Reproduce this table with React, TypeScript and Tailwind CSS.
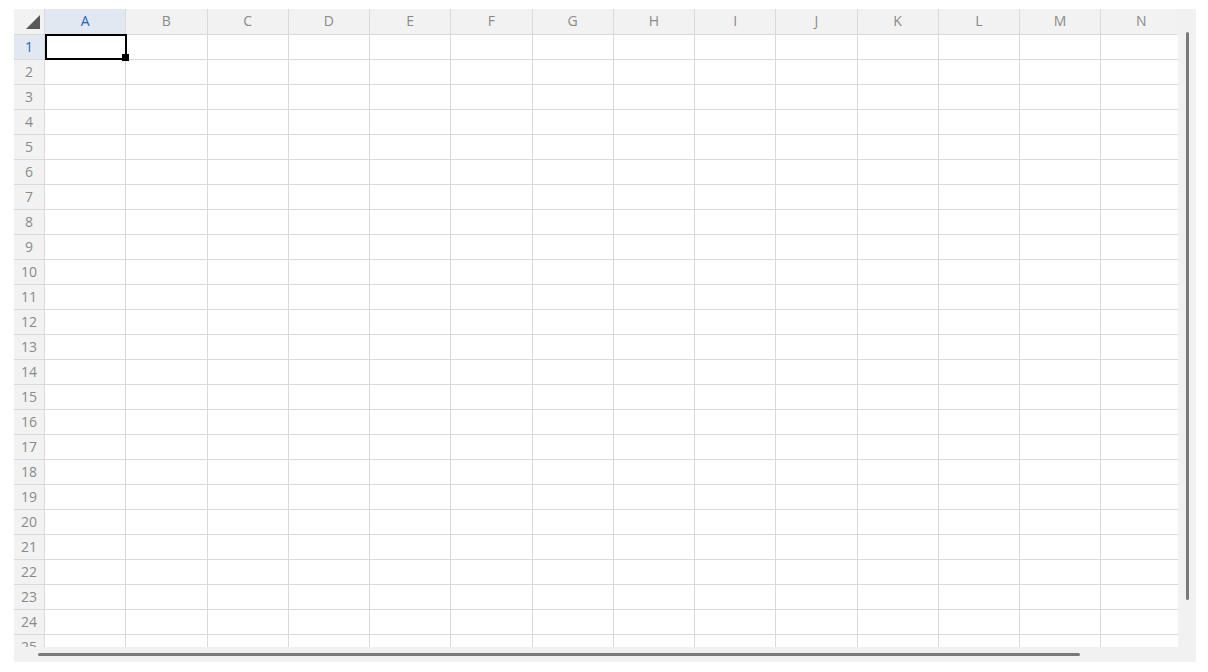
const COLS = ['A', 'B', 'C', 'D', 'E', 'F', 'G', 'H', 'I', 'J', 'K', 'L', 'M', 'N'];
const ROWS = Array.from({ length: 26 }, (_, i) => i + 1);

const App = () => {
  return (
    <div className="w-[1208px] h-[672px] bg-white pt-[9px] pl-[14px]" style={{ fontFamily: '"Open Sans", "Noto Sans", sans-serif' }}>
      <div className="w-[1182px] h-[653px] flex bg-[#f1f1f1]">
        <div className="w-[1164px] flex flex-col">
          {/* sheet viewport */}
          <div className="relative h-[638px] overflow-hidden bg-white">
            <div className="grid grid-cols-[31px_repeat(14,81.25px)] text-[14px] text-[#8a8a8a]">
              <div className="h-[26px] bg-[#f2f2f2] border-r border-b border-[#dadada] flex items-end justify-end pr-[4px] pb-[5px]">
                <svg width="14" height="14" viewBox="0 0 14 14">
                  <polygon points="14,0 14,14 0,14" fill="#595959" />
                </svg>
              </div>
              {COLS.map((c, i) => (
                <div
                  key={c}
                  className={
                    i === 0
                      ? 'h-[26px] pb-[2px] bg-[#e1e8f2] border-r border-b border-[#dadada] flex items-center justify-center text-[#2a63b8]'
                      : 'h-[26px] pb-[2px] bg-[#f2f2f2] border-r border-b border-[#dadada] flex items-center justify-center'
                  }
                >
                  {c}
                </div>
              ))}
              {ROWS.map(r => (
                <div key={r} className="contents">
                  <div
                    className={
                      r === 1
                        ? 'h-[25px] pb-[2px] bg-[#e1e8f2] border-r border-b border-[#dadada] flex items-center justify-center text-[#2a63b8]'
                        : 'h-[25px] pb-[2px] bg-[#f2f2f2] border-r border-b border-[#dadada] flex items-center justify-center'
                    }
                  >
                    {r}
                  </div>
                  {COLS.map(c => (
                    <div key={c} className="h-[25px] border-r border-b border-[#dadada]" />
                  ))}
                </div>
              ))}
            </div>
            {/* active cell */}
            <div className="absolute left-[31px] top-[25px] w-[82px] h-[26px] border-2 border-black" />
            <div className="absolute left-[108px] top-[45px] w-[7px] h-[7px] bg-black" />
          </div>
          {/* horizontal scrollbar */}
          <div className="relative h-[15px] bg-[#f1f1f1]">
            <div className="absolute left-[24px] top-[6px] w-[1042px] h-[3px] rounded-full bg-[#7a7a7a]" />
          </div>
        </div>
        {/* vertical scrollbar */}
        <div className="relative w-[18px] bg-[#f1f1f1]">
          <div className="absolute left-[8px] top-[23px] w-[3px] h-[568px] rounded-full bg-[#7a7a7a]" />
        </div>
      </div>
    </div>
  );
};

export default App;
